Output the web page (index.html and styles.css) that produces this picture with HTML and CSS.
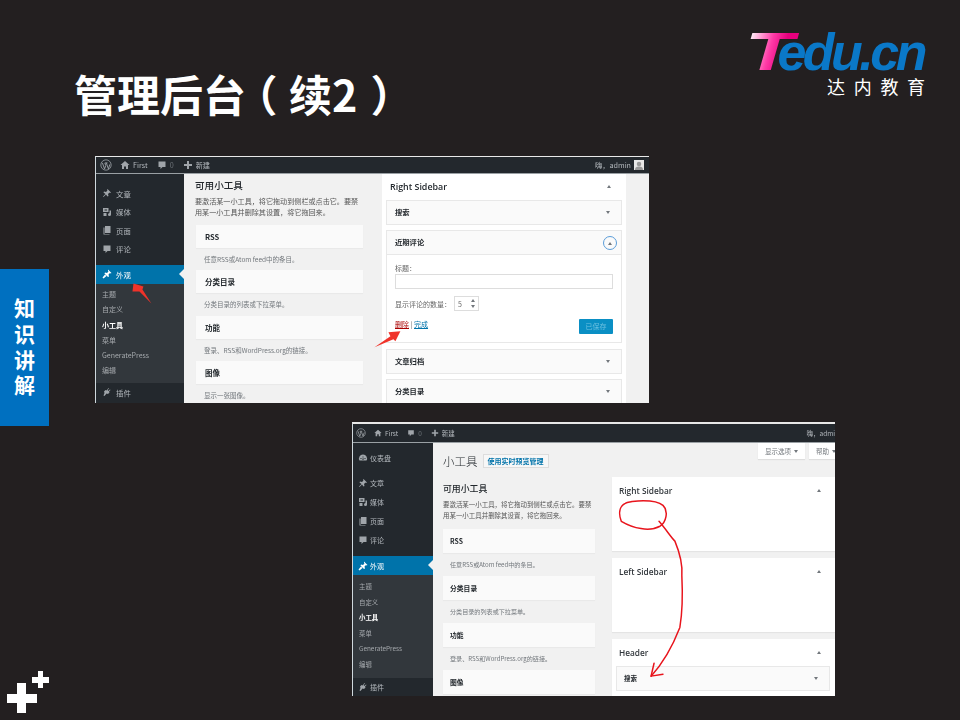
FILE: index.html
```html
<!DOCTYPE html>
<html lang="zh-CN">
<head>
  <meta charset="UTF-8">
  <title>管理后台（续2）</title>
  <link rel="stylesheet" href="styles.css">
</head>
<body>

<svg class="sprites" width="0" height="0">
  <symbol id="i-wp" viewBox="0 0 20 20"><circle cx="10" cy="10" r="8.6" fill="none" stroke="currentColor" stroke-width="1.3"/><path d="M4 6.5l3.6 10 2-5.6-1.5-4.2M8 6.5h4.6M10.6 6.8l3.4 9.6 2.4-7.4" fill="none" stroke="currentColor" stroke-width="1.5"/></symbol>
  <symbol id="i-home" viewBox="0 0 20 20"><path d="M10 2L1 10h3v8h4v-5h4v5h4v-8h3z" fill="currentColor"/></symbol>
  <symbol id="i-comment" viewBox="0 0 20 20"><path d="M3 3h14v11h-6l-4 4v-4H3z" fill="currentColor"/></symbol>
  <symbol id="i-plus" viewBox="0 0 20 20"><path d="M8 2h4v6h6v4h-6v6H8v-6H2V8h6z" fill="currentColor"/></symbol>
  <symbol id="i-pin" viewBox="0 0 20 20"><path d="M11 2l7 7-2 1-1-1-3 3 1 4-2 1-3-4-5 5-1-1 5-5-4-3 1-2 4 1 3-3-1-1z" fill="currentColor"/></symbol>
  <symbol id="i-media" viewBox="0 0 20 20"><path d="M2 2h11v8H2zM5 5h5v2H5zM3 12h6v6H3zM15 7h3v8a3 3 0 1 1-3-3z" fill="currentColor" fill-rule="evenodd"/></symbol>
  <symbol id="i-page" viewBox="0 0 20 20"><path d="M6 2h11v14H6zM3 5h2v13h10v1H3z" fill="currentColor"/></symbol>
  <symbol id="i-brush" viewBox="0 0 20 20"><path d="M12 1l7 7-2 1-1-1-3 3 1 4-2 1-7-7 1-2 4 1 3-3-1-1zM6 11l3 3-6 5-2-2z" fill="currentColor"/></symbol>
  <symbol id="i-plugin" viewBox="0 0 20 20"><path d="M13 2l1 1-3 3 2 2 3-3 1 1-3 3 1 2-3 3-3-1-4 5-2-1 2-5-1-3 3-3 2 1z" fill="currentColor"/></symbol>
  <symbol id="i-dash" viewBox="0 0 20 20"><path d="M10 3a8 8 0 0 0-7 12h14a8 8 0 0 0-7-12zM9 7h2v2H9zM5 10h2v2H5zM13 10h2v2h-2zM9 11l2-1v4H9z" fill="currentColor" fill-rule="evenodd"/></symbol>
  <symbol id="i-user" viewBox="0 0 20 20"><rect width="20" height="20" fill="#e8e8e8"/><circle cx="10" cy="8" r="4.5" fill="#999"/><path d="M2 20c0-6 4-7 8-7s8 1 8 7z" fill="#999"/></symbol>
</svg>

<div class="slide">
  <h1 class="title">管理后台<span class="paren paren-open">（</span>续2<span class="paren paren-close">）</span></h1>

  <div class="logo">
    <div class="logo-mark"><span class="logo-t">T</span><span class="logo-edu">edu.cn</span></div>
    <div class="logo-cn">达内教育</div>
  </div>

  <div class="side-tab">知识讲解</div>

  <svg class="plus-mark" width="44" height="42" viewBox="0 0 44 42">
    <path d="M11 12h9v11h11v9H20v10h-9V32H1v-9h10zM32 0h5v6h6v6h-6v5h-5v-5h-6V6h6z" fill="#fff"/>
  </svg>

  <!-- first screenshot -->
  <div class="shot shot-a">
    <div class="adminbar">
      <svg class="bar-wp"><use href="#i-wp"/></svg>
      <svg class="bar-ico"><use href="#i-home"/></svg><span>First</span>
      <svg class="bar-ico bar-gap"><use href="#i-comment"/></svg><span class="dim">0</span>
      <svg class="bar-ico bar-gap"><use href="#i-plus"/></svg><span>新建</span>
      <span class="bar-right">嗨，admin</span>
      <svg class="bar-user"><use href="#i-user"/></svg>
    </div>
    <div class="wp-body">
      <div class="menu">
        <div class="menu-group">
          <div class="menu-item"><svg><use href="#i-pin"/></svg>文章</div>
          <div class="menu-item"><svg><use href="#i-media"/></svg>媒体</div>
          <div class="menu-item"><svg><use href="#i-page"/></svg>页面</div>
          <div class="menu-item"><svg><use href="#i-comment"/></svg>评论</div>
        </div>
        <div class="menu-item active"><svg><use href="#i-brush"/></svg>外观</div>
        <div class="submenu">
          <div>主题</div>
          <div>自定义</div>
          <div class="current">小工具</div>
          <div>菜单</div>
          <div>GeneratePress</div>
          <div>编辑</div>
        </div>
        <div class="menu-item"><svg><use href="#i-plugin"/></svg>插件</div>
      </div>

      <div class="widgets">
        <h2>可用小工具</h2>
        <p class="desc">要激活某一小工具，将它拖动到侧栏或点击它。要禁<br>用某一小工具并删除其设置，将它拖回来。</p>
        <div class="tile">RSS</div>
        <p class="caption">任意RSS或Atom feed中的条目。</p>
        <div class="tile">分类目录</div>
        <p class="caption">分类目录的列表或下拉菜单。</p>
        <div class="tile">功能</div>
        <p class="caption">登录、RSS和WordPress.org的链接。</p>
        <div class="tile">图像</div>
        <p class="caption">显示一张图像。</p>
      </div>

      <div class="sidebar-panel">
        <div class="panel-head">Right Sidebar<i class="tri up"></i></div>
        <div class="row">搜索<i class="tri down"></i></div>
        <div class="open-widget">
          <div class="row-head">近期评论<span class="toggle"><i class="tri up"></i></span></div>
          <div class="form">
            <div class="field-label">标题：</div>
            <div class="text-input"></div>
            <div class="number-line">显示评论的数量：
              <span class="number-input">5<span class="spin"><i class="tri up"></i><i class="tri down"></i></span></span>
            </div>
            <div class="form-foot">
              <span class="links"><a class="del">删除</a> | <a class="done">完成</a></span>
              <span class="saved">已保存</span>
            </div>
          </div>
        </div>
        <div class="row">文章归档<i class="tri down"></i></div>
        <div class="row">分类目录<i class="tri down"></i></div>
      </div>
    </div>

    <svg class="ink" viewBox="0 0 554 247">
      <path d="M38 128l-1 8 7 0 12 12-9-14 1-3z" fill="#f0332a"/>
      <path d="M306 176l-12 1 2 4-16 11 19-8 2 2z" fill="#f0332a"/>
    </svg>
  </div>

  <!-- second screenshot -->
  <div class="shot shot-b">
    <div class="adminbar">
      <svg class="bar-wp"><use href="#i-wp"/></svg>
      <svg class="bar-ico"><use href="#i-home"/></svg><span>First</span>
      <svg class="bar-ico bar-gap"><use href="#i-comment"/></svg><span class="dim">0</span>
      <svg class="bar-ico bar-gap"><use href="#i-plus"/></svg><span>新建</span>
      <span class="bar-right">嗨，admi</span>
    </div>
    <div class="wp-body">
      <div class="menu">
        <div class="menu-item dash"><svg><use href="#i-dash"/></svg>仪表盘</div>
        <div class="menu-group">
          <div class="menu-item"><svg><use href="#i-pin"/></svg>文章</div>
          <div class="menu-item"><svg><use href="#i-media"/></svg>媒体</div>
          <div class="menu-item"><svg><use href="#i-page"/></svg>页面</div>
          <div class="menu-item"><svg><use href="#i-comment"/></svg>评论</div>
        </div>
        <div class="menu-item active"><svg><use href="#i-brush"/></svg>外观</div>
        <div class="submenu">
          <div>主题</div>
          <div>自定义</div>
          <div class="current">小工具</div>
          <div>菜单</div>
          <div>GeneratePress</div>
          <div>编辑</div>
        </div>
        <div class="menu-item"><svg><use href="#i-plugin"/></svg>插件</div>
      </div>

      <div class="widgets">
        <div class="page-head"><span class="page-title">小工具</span><span class="live-btn">使用实时预览管理</span></div>
        <h2>可用小工具</h2>
        <p class="desc">要激活某一小工具，将它拖动到侧栏或点击它。要禁<br>用某一小工具并删除其设置，将它拖回来。</p>
        <div class="tile">RSS</div>
        <p class="caption">任意RSS或Atom feed中的条目。</p>
        <div class="tile">分类目录</div>
        <p class="caption">分类目录的列表或下拉菜单。</p>
        <div class="tile">功能</div>
        <p class="caption">登录、RSS和WordPress.org的链接。</p>
        <div class="tile">图像</div>
      </div>

      <div class="areas">
        <div class="tabs">
          <span class="tab">显示选项<i class="tri down"></i></span>
          <span class="tab">帮助<i class="tri down"></i></span>
        </div>
        <div class="area">Right Sidebar<i class="tri up"></i></div>
        <div class="area">Left Sidebar<i class="tri up"></i></div>
        <div class="area area-last">Header<i class="tri up"></i>
          <div class="row">搜索<i class="tri down"></i></div>
        </div>
      </div>
    </div>

    <svg class="ink" viewBox="0 0 483 274">
      <g fill="none" stroke="#e8141c" stroke-width="1.500" stroke-linecap="round" stroke-linejoin="round">
        <path d="M281 80C292 79 306 79 312 84C318 90 315 101 309 105C298 111 282 107 270 100C267 92 268 85 274 82C277 80 279 81 281 80"/>
        <path d="M308 100C315 108 320 116 324 120C329 132 332 143 331 155C332 175 331 195 329 207C322 225 312 243 300 256"/>
        <path d="M303 243L300 256L312 254"/>
      </g>
    </svg>
  </div>
</div>

</body>
</html>
```

FILE: styles.css
```css
* {
  box-sizing: border-box;
}
html, body {
  margin: 0;
  padding: 0;
  background-color: #231f20;
}
.sprites {
  position: absolute;
}
.slide {
  position: relative;
  width: 960px;
  height: 720px;
  overflow: hidden;
  background-color: #231f20;
  font-family: "Noto Sans CJK SC", sans-serif;
}

/* slide furniture */
.title {
  margin: 0;
  padding: 58px 0 0 74px;
  font-size: 43px;
  line-height: 70px;
  font-weight: 700;
  color: #fff;
}
.paren {
  display: inline-block;
  font-feature-settings: "halt";
}
.paren-open {
  margin: 0 11.500px 0 10px;
}
.paren-close {
  margin-left: 13px;
}
.logo {
  position: absolute;
  left: 749px;
  top: 28px;
  width: 178px;
}
.logo-mark {
  display: flex;
  align-items: baseline;
  font-family: "Liberation Sans", sans-serif;
  font-size: 52px;
  line-height: 48px;
  font-weight: 700;
  font-style: italic;
  letter-spacing: -3.500px;
}
.logo-t {
  display: inline-block;
  margin-left: -4px;
  padding-right: 8px;
  margin-right: -8px;
  font-size: 53px;
  letter-spacing: 0;
  transform: scaleX(1.5);
  transform-origin: left center;
  background: linear-gradient(100deg, #fff 8%, #ff3aa6 42%, #e6007e 62%, #e6007e 80%, #fff 100%);
  -webkit-background-clip: text;
  background-clip: text;
  color: transparent;
}
.logo-edu {
  color: #0a78c8;
}
.logo-cn {
  margin: 0.500px 0 0 78px;
  font-size: 18px;
  line-height: 18px;
  letter-spacing: 8.700px;
  color: #fff;
  white-space: nowrap;
}
.side-tab {
  position: absolute;
  left: 0;
  top: 269px;
  width: 49px;
  height: 157px;
  padding-top: 3px;
  display: flex;
  align-items: center;
  justify-content: center;
  writing-mode: vertical-rl;
  background-color: #0070c0;
  color: #fff;
  font-size: 21px;
  font-weight: 700;
  letter-spacing: 4.600px;
}
.plus-mark {
  position: absolute;
  left: 6px;
  top: 671px;
}

/* screenshots */
.shot {
  position: absolute;
  overflow: hidden;
  display: flex;
  flex-direction: column;
  background-color: #f1f1f1;
  border-top: 1px solid #e8e8e8;
  border-left: 1px solid #cfd8dd;
  filter: blur(0.5px);
  font-size: 8px;
  color: #444;
}
.shot-a {
  left: 95px;
  top: 156px;
  width: 554px;
  height: 247px;
}
.shot-b {
  left: 352px;
  top: 422px;
  width: 483px;
  height: 274px;
  border-top-width: 2px;
}
.ink {
  position: absolute;
  left: 0;
  top: 0;
  width: 100%;
  height: 100%;
}
.shot-a .ink {
  left: -1px;
  top: -1px;
}
.shot-b .ink {
  left: -1px;
  top: -2px;
}

/* admin bar */
.adminbar {
  flex: none;
  display: flex;
  align-items: center;
  height: 17px;
  padding: 0 4px;
  background-color: #23282d;
  border-bottom: 1px solid #9aa0a4;
  color: #b4b9be;
  font-size: 7.200px;
}
.shot-b .adminbar {
  height: 19px;
  padding: 0 3px;
  font-size: 6.500px;
}
.adminbar span {
  white-space: nowrap;
}
.adminbar .dim {
  color: #6d7378;
}
.bar-wp {
  width: 12px;
  height: 12px;
  margin-right: 8px;
  color: #a0a5aa;
}
.bar-ico {
  width: 10px;
  height: 10px;
  margin-right: 3px;
  color: #a0a5aa;
}
.shot-b .bar-wp {
  width: 10px;
  height: 10px;
}
.shot-b .bar-ico {
  width: 8px;
  height: 8px;
}
.bar-gap {
  margin-left: 9px;
}
.bar-right {
  margin-left: auto;
  margin-right: 3px;
}
.shot-b .bar-right {
  margin-right: -3px;
}
.bar-user {
  width: 10px;
  height: 10px;
  margin-right: 1px;
}

.wp-body {
  flex: 1;
  display: flex;
  min-height: 0;
}

/* left menu */
.menu {
  flex: none;
  width: 88px;
  background-color: #23282d;
  color: #b4b9be;
  padding-top: 10px;
}
.shot-b .menu {
  width: 80px;
  padding-top: 5px;
}
.menu-item {
  display: flex;
  align-items: center;
  gap: 4px;
  height: 18.500px;
  padding-left: 6px;
  font-size: 7.400px;
  position: relative;
}
.shot-b .menu-item {
  height: 19px;
  padding-left: 5px;
  gap: 2px;
  font-size: 7px;
}
.menu-item svg {
  width: 10px;
  height: 10px;
  color: #a0a5aa;
}
.menu-group {
  padding-bottom: 7px;
}
.shot-b .dash {
  margin-bottom: 6px;
}
.menu-item.active {
  background-color: #0073aa;
  color: #fff;
}
.menu-item.active svg {
  color: #fff;
}
.menu-item.active::after {
  content: "";
  position: absolute;
  right: 0;
  top: 4px;
  border: 5px solid transparent;
  border-left: 0;
  border-right-color: #f1f1f1;
}
.submenu {
  padding: 3.500px 0 4px 6px;
  background-color: #32373c;
  color: #a5a9ad;
  font-size: 7px;
  line-height: 15.300px;
}
.shot-b .submenu {
  padding: 4px 0 5px 6px;
  font-size: 6.400px;
  line-height: 15.600px;
}
.submenu .current {
  color: #fff;
  font-weight: 700;
}

/* available widgets column */
.widgets {
  flex: none;
  width: 198px;
  padding: 4px 0 0 11px;
}
.shot-b .widgets {
  width: 179px;
  padding: 11px 0 0 10px;
}
.widgets h2 {
  margin: 0;
  font-size: 9.600px;
  line-height: 14px;
  font-weight: 500;
  color: #23282d;
}
.shot-b .widgets h2 {
  margin-top: 14px;
  font-size: 8.900px;
}
.desc {
  margin: 4px 0 8px;
  font-size: 7.100px;
  line-height: 10.500px;
  color: #555;
  white-space: nowrap;
}
.shot-b .desc {
  font-size: 6.460px;
  line-height: 11px;
  margin: 3px 0 8px;
}
.tile {
  width: 167px;
  height: 23px;
  margin-left: 1px;
  padding-left: 9px;
  background-color: #fafafa;
  box-shadow: 0 1px 1px rgba(0, 0, 0, 0.03);
  font-size: 7.500px;
  line-height: 23px;
  font-weight: 700;
  color: #23282d;
}
.shot-b .tile {
  width: 152px;
  height: 24px;
  margin-left: 0;
  padding-left: 7px;
  font-size: 6.800px;
  line-height: 24px;
}
.caption {
  margin: 0;
  padding-left: 9px;
  height: 22.300px;
  font-size: 6.500px;
  line-height: 22.300px;
  color: #72777c;
  white-space: nowrap;
}
.shot-b .caption {
  padding-left: 7px;
  height: 23px;
  font-size: 6.100px;
  line-height: 23px;
}

/* right sidebar panel */
.sidebar-panel {
  flex: none;
  width: 244px;
  padding: 0 4px;
  background-color: #fff;
}
.panel-head {
  position: relative;
  height: 26px;
  padding-left: 4px;
  font-family: "Open Sans", sans-serif;
  font-size: 8.900px;
  font-weight: 600;
  line-height: 26px;
  color: #23282d;
}
.tri {
  display: inline-block;
  width: 0;
  height: 0;
  border-left: 2.500px solid transparent;
  border-right: 2.500px solid transparent;
}
.tri.up {
  border-bottom: 3px solid #72777c;
}
.tri.down {
  border-top: 3px solid #72777c;
}
.panel-head .tri, .row .tri, .area > .tri {
  position: absolute;
  right: 11px;
  top: 50%;
  margin-top: -2px;
}
.row {
  position: relative;
  height: 25px;
  margin-bottom: 5px;
  padding-left: 8px;
  background-color: #fafafa;
  border: 1px solid #e8e8e8;
  font-size: 7.300px;
  line-height: 23px;
  font-weight: 700;
  color: #23282d;
}
.open-widget {
  height: 113px;
  margin-bottom: 6px;
  background-color: #fff;
  border: 1px solid #e8e8e8;
}
.row-head {
  position: relative;
  height: 24px;
  padding-left: 8px;
  background-color: #fafafa;
  border-bottom: 1px solid #e8e8e8;
  font-size: 7.300px;
  line-height: 23px;
  font-weight: 700;
  color: #23282d;
}
.toggle {
  position: absolute;
  right: 4px;
  top: 5px;
  width: 14px;
  height: 14px;
  display: flex;
  align-items: center;
  justify-content: center;
  border: 1px solid #5b9dd9;
  border-radius: 50%;
}
.form {
  padding: 7px 8px 0;
  color: #666;
  font-size: 7px;
}
.field-label {
  line-height: 12px;
}
.text-input {
  height: 15px;
  margin: 0 0 7px;
  border: 1px solid #ddd;
  background-color: #fff;
}
.number-line {
  display: flex;
  align-items: center;
  gap: 3px;
  height: 15px;
}
.number-input {
  display: flex;
  align-items: center;
  justify-content: space-between;
  width: 25px;
  height: 15px;
  padding: 0 3px;
  border: 1px solid #ddd;
}
.spin {
  display: flex;
  flex-direction: column;
  gap: 3px;
}
.form-foot {
  display: flex;
  justify-content: space-between;
  align-items: flex-start;
  margin-top: 8px;
}
.links {
  line-height: 10px;
}
.del {
  color: #a00;
  text-decoration: underline;
}
.done {
  color: #0073aa;
  text-decoration: underline;
}
.saved {
  width: 34px;
  height: 15px;
  background-color: #0a8fc4;
  border-radius: 1px;
  text-align: center;
  line-height: 15px;
  color: #6cc0e0;
}

/* second screenshot, page head and widget areas */
.page-head {
  display: flex;
  align-items: center;
  gap: 5px;
  height: 14px;
}
.page-title {
  font-size: 11.500px;
  font-weight: 300;
  color: #23282d;
}
.live-btn {
  padding: 0 4px;
  height: 14px;
  background-color: #f7f7f7;
  border: 1px solid #ddd;
  font-size: 7px;
  line-height: 12px;
  font-weight: 700;
  color: #0073aa;
  white-space: nowrap;
}
.areas {
  flex: 1;
}
.tabs {
  display: flex;
  justify-content: flex-end;
  gap: 4px;
  height: 34px;
  margin-right: -8px;
}
.tab {
  display: flex;
  align-items: center;
  gap: 3px;
  height: 16px;
  padding: 0 7px;
  background-color: #fff;
  box-shadow: 0 1px 1px rgba(0, 0, 0, 0.08);
  font-size: 6.500px;
  color: #72777c;
  white-space: nowrap;
}
.area {
  position: relative;
  height: 74px;
  margin-bottom: 7px;
  padding-left: 7px;
  background-color: #fff;
  box-shadow: 0 1px 1px rgba(0, 0, 0, 0.05);
  font-family: "Open Sans", sans-serif;
  font-size: 8.300px;
  font-weight: 600;
  line-height: 27px;
  color: #32373c;
}
.area > .tri {
  top: 12px;
  margin-top: 0;
  right: 14px;
}
.area-last {
  height: 70px;
}
.area .row {
  margin: 0 5px 0 -3px;
  padding-left: 7px;
  font-family: "Noto Sans CJK SC", sans-serif;
  font-size: 6.500px;
  line-height: 23px;
}
.area .row .tri {
  right: 11px;
}
```
